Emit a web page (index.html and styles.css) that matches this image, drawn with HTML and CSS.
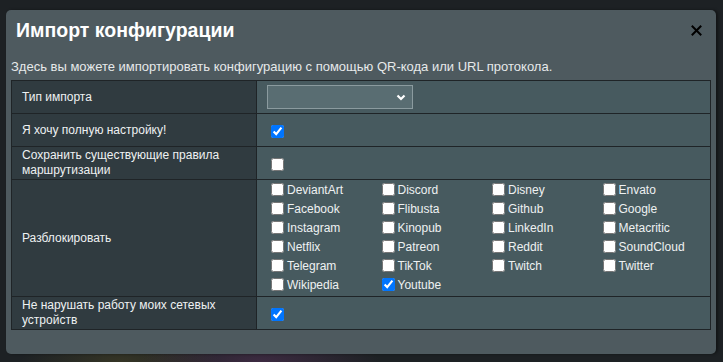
FILE: index.html
```html
<!DOCTYPE html>
<html lang="ru">
  <head>
    <meta charset="UTF-8" />
    <title>Импорт конфигурации</title>
    <link rel="stylesheet" href="styles.css">
  </head>
  <body>
    <div class="dialog">
      <div class="dialog-header">
        <h2 class="dialog-title">Импорт конфигурации</h2>
        <button class="close" aria-label="Закрыть">
          <svg width="11" height="11" viewBox="0 0 11 11"><path d="M1.5 1.5 L9.5 9.5 M9.5 1.5 L1.5 9.5" stroke="#000" stroke-width="2" stroke-linecap="square"/></svg>
        </button>
      </div>
      <p class="dialog-description">Здесь вы можете импортировать конфигурацию с помощью QR-кода или URL протокола.</p>

      <table class="form-table">
        <colgroup>
          <col class="label-col">
          <col>
        </colgroup>
        <tr>
          <th>Тип импорта</th>
          <td>
            <div class="select">
              <svg width="10" height="7" viewBox="0 0 10 7"><path d="M1.5 1.5 L5 5 L8.5 1.5" fill="none" stroke="#fff" stroke-width="2.2"/></svg>
            </div>
          </td>
        </tr>
        <tr>
          <th>Я хочу полную настройку!</th>
          <td><input type="checkbox" checked></td>
        </tr>
        <tr>
          <th>Сохранить существующие правила маршрутизации</th>
          <td><input type="checkbox"></td>
        </tr>
        <tr class="tall">
          <th>Разблокировать</th>
          <td>
            <div class="services">
              <label><input type="checkbox">DeviantArt</label>
              <label><input type="checkbox">Discord</label>
              <label><input type="checkbox">Disney</label>
              <label><input type="checkbox">Envato</label>
              <label><input type="checkbox">Facebook</label>
              <label><input type="checkbox">Flibusta</label>
              <label><input type="checkbox">Github</label>
              <label><input type="checkbox">Google</label>
              <label><input type="checkbox">Instagram</label>
              <label><input type="checkbox">Kinopub</label>
              <label><input type="checkbox">LinkedIn</label>
              <label><input type="checkbox">Metacritic</label>
              <label><input type="checkbox">Netflix</label>
              <label><input type="checkbox">Patreon</label>
              <label><input type="checkbox">Reddit</label>
              <label><input type="checkbox">SoundCloud</label>
              <label><input type="checkbox">Telegram</label>
              <label><input type="checkbox">TikTok</label>
              <label><input type="checkbox">Twitch</label>
              <label><input type="checkbox">Twitter</label>
              <label><input type="checkbox">Wikipedia</label>
              <label><input type="checkbox" checked>Youtube</label>
            </div>
          </td>
        </tr>
        <tr>
          <th>Не нарушать работу моих сетевых устройств</th>
          <td><input type="checkbox" checked></td>
        </tr>
      </table>
    </div>
  </body>
</html>
```

FILE: styles.css
```css
html {
  background: #1d2124;
}
body {
  margin: 0;
  padding: 10px 0 0 6px;
  font-family: "Liberation Sans", Arial, sans-serif;
  color: #e8ecee;
  background: radial-gradient(ellipse 120px 30px at 260px 362px, rgba(120, 60, 120, 0.35), transparent),
              radial-gradient(ellipse 100px 30px at 120px 362px, rgba(110, 100, 40, 0.3), transparent),
              #1d2124;
  height: 352px;
  overflow: hidden;
}
.dialog {
  width: 710px;
  height: 344px;
  box-sizing: border-box;
  background: #4e5a5f;
  border-radius: 5px;
  box-shadow: 2px 0 3px rgba(0, 0, 0, 0.4);
  padding: 0 5px;
}
.dialog-header {
  display: flex;
  justify-content: space-between;
  align-items: center;
  padding: 9px 9px 0 5px;
  height: 22px;
}
.dialog-title {
  margin: 0;
  font-size: 19.5px;
  line-height: 22px;
  font-weight: bold;
  color: #ffffff;
}
.close {
  background: none;
  border: none;
  padding: 0;
  display: flex;
  cursor: pointer;
}
.dialog-description {
  margin: 18px 0 6px;
  font-size: 13px;
  line-height: 15px;
  color: #e6e9ea;
}
.form-table {
  width: 700px;
  table-layout: fixed;
  border-collapse: collapse;
  border: 1px solid #1f2427;
  font-size: 12px;
}
.label-col {
  width: 245px;
}
.form-table th,
.form-table td {
  border: 1px solid #1f2427;
  height: 32px;
  padding: 0 10px;
  line-height: 15px;
}
.form-table th {
  background: #303b40;
  font-weight: normal;
  text-align: left;
  color: #eef1f2;
}
.form-table td {
  background: #475a5f;
}
.form-table td > input {
  margin: 3px 3px 0 4px;
  vertical-align: middle;
}
.tall td {
  padding-top: 1px;
  padding-bottom: 1px;
}
.select {
  width: 146px;
  height: 24px;
  box-sizing: border-box;
  background: #596d72;
  border: 1px solid #8b9b9f;
  display: flex;
  align-items: center;
  justify-content: flex-end;
  padding-right: 6px;
}
.services {
  display: grid;
  grid-template-columns: repeat(4, 110.5px);
}
.services label {
  display: flex;
  align-items: center;
  height: 19px;
  font-size: 12px;
  color: #eef1f2;
}
.services input {
  margin: 0 3px 2px 4px;
}
```
